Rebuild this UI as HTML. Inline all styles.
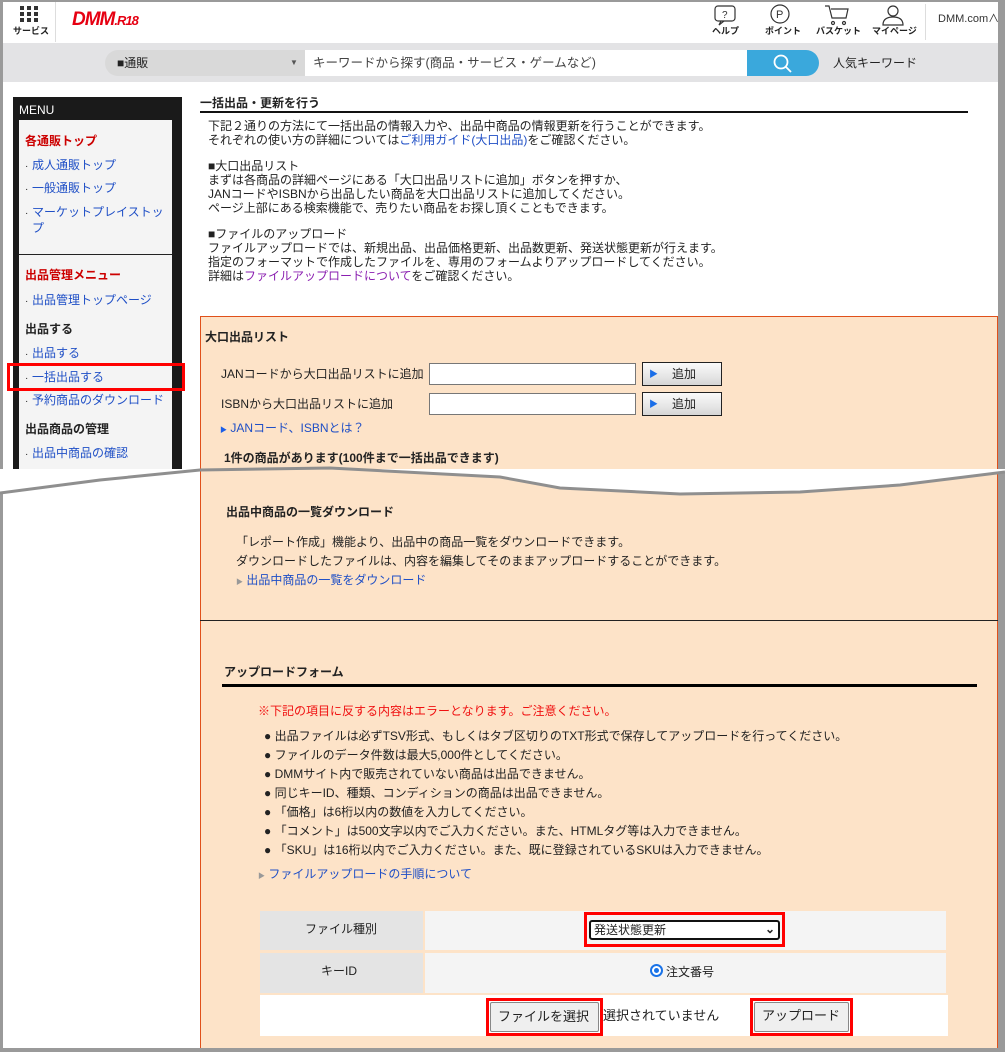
<!DOCTYPE html>
<html><head><meta charset="utf-8"><style>
*{margin:0;padding:0;box-sizing:border-box}
body{width:1005px;height:1052px;background:#9a9a9a;position:relative;overflow:hidden;font-family:"Liberation Sans","Noto Sans CJK JP",sans-serif;font-size:12px;color:#222}
.a{position:absolute;white-space:nowrap;line-height:14px}
.page{position:absolute;left:3px;top:2px;width:995px;height:1046px;background:#fff}
a,.lk{color:#1f4fc6;text-decoration:none}
b{font-weight:bold}
.red{color:#cc0000}
.sm{font-size:9px;line-height:10px}
.d{display:inline-block;width:7px;font-size:10px}
</style></head><body>
<div class="page"></div>
<!-- header -->
<div class="a" style="left:20px;top:6px;width:18px;height:16px">
<svg width="18" height="16"><g fill="#333"><rect x="0" y="0" width="4" height="4"/><rect x="7" y="0" width="4" height="4"/><rect x="14" y="0" width="4" height="4"/><rect x="0" y="6" width="4" height="4"/><rect x="7" y="6" width="4" height="4"/><rect x="14" y="6" width="4" height="4"/><rect x="0" y="12" width="4" height="4"/><rect x="7" y="12" width="4" height="4"/><rect x="14" y="12" width="4" height="4"/></g></svg></div>
<div class="a sm" style="left:13px;top:26px;font-weight:bold">サービス</div>
<div class="a" style="left:55px;top:2px;width:1px;height:40px;background:#ddd"></div>
<div class="a" style="left:72px;top:10px;color:#e60012;font-weight:900;font-size:19px;line-height:20px;font-style:italic;letter-spacing:-1px">DMM<span style="font-size:13px">.R18</span></div>
<svg class="a" style="left:712px;top:4px" width="200" height="22" fill="none" stroke="#333" stroke-width="1.2">
<rect x="3" y="2" width="20" height="15" rx="3"/><path d="M9 17 l-2 4 l5 -4"/>
<text x="10" y="14" font-size="10" fill="#333" stroke="none">?</text>
<circle cx="68" cy="10" r="9"/><text x="64" y="14" font-size="11" fill="#333" stroke="none">P</text>
<path d="M113 2 h4 l3 12 h14 l2 -9 h-17"/><circle cx="121" cy="19" r="1.5"/><circle cx="132" cy="19" r="1.5"/>
<circle cx="181" cy="7" r="5"/><path d="M171 21 c0 -6 4 -8 10 -8 c6 0 10 2 10 8 z"/>
</svg>
<div class="a sm" style="left:712px;top:26px;font-weight:bold">ヘルプ</div>
<div class="a sm" style="left:765px;top:26px;font-weight:bold">ポイント</div>
<div class="a sm" style="left:816px;top:26px;font-weight:bold">バスケット</div>
<div class="a sm" style="left:872px;top:26px;font-weight:bold">マイページ</div>
<div class="a" style="left:925px;top:4px;width:1px;height:36px;background:#ddd"></div>
<div class="a" style="left:938px;top:12px;font-size:11px;color:#333">DMM.com∧</div>
<div class="a" style="left:3px;top:43px;width:995px;height:39px;background:#e3e3e5"></div>
<div class="a" style="left:105px;top:50px;width:200px;height:26px;background:#d9d9d9;border-radius:13px 0 0 13px"></div>
<div class="a" style="left:305px;top:50px;width:442px;height:26px;background:#fff"></div>
<div class="a" style="left:747px;top:50px;width:72px;height:26px;background:#3aa8dc;border-radius:0 13px 13px 0"></div>
<svg class="a" style="left:772px;top:53px" width="22" height="22" fill="none" stroke="#fff" stroke-width="1.8"><circle cx="9" cy="9" r="6.5"/><path d="M14 14 l5 5"/></svg>
<div class="a" style="left:117px;top:56px">■通販</div>
<div class="a" style="left:290px;top:56px;font-size:8px;color:#555">▼</div>
<div class="a" style="left:313px;top:56px;color:#444;font-size:12.5px">キーワードから探す(商品・サービス・ゲームなど)</div>
<div class="a" style="left:833px;top:56px">人気キーワード</div>

<!-- sidebar -->
<div class="a" style="left:13px;top:97px;width:169px;height:372px;background:#1a1a1a"></div>
<div class="a" style="left:19px;top:103px;color:#fff;font-size:12px">MENU</div>
<div class="a" style="left:19px;top:120px;width:153px;height:349px;background:#f4f4f4"></div>
<div class="a" style="left:19px;top:254px;width:153px;height:1px;background:#222"></div>
<div class="a red" style="left:25px;top:134px;font-weight:bold">各通販トップ</div>
<div class="a" style="left:25px;top:158px"><span class="d">·</span><a>成人通販トップ</a></div>
<div class="a" style="left:25px;top:181px"><span class="d">·</span><a>一般通販トップ</a></div>
<div class="a" style="left:25px;top:205px"><span class="d">·</span><a>マーケットプレイストッ</a></div>
<div class="a" style="left:32px;top:221px"><a>プ</a></div>
<div class="a red" style="left:25px;top:268px;font-weight:bold">出品管理メニュー</div>
<div class="a" style="left:25px;top:293px"><span class="d">·</span><a>出品管理トップページ</a></div>
<div class="a" style="left:25px;top:322px;font-weight:bold">出品する</div>
<div class="a" style="left:25px;top:346px"><span class="d">·</span><a>出品する</a></div>
<div class="a" style="left:25px;top:370px"><span class="d">·</span><a>一括出品する</a></div>
<div class="a" style="left:7px;top:363px;width:178px;height:28px;border:3px solid #f00"></div>
<div class="a" style="left:25px;top:393px"><span class="d">·</span><a>予約商品のダウンロード</a></div>
<div class="a" style="left:25px;top:422px;font-weight:bold">出品商品の管理</div>
<div class="a" style="left:25px;top:446px"><span class="d">·</span><a>出品中商品の確認</a></div>

<!-- content top -->
<div class="a" style="left:200px;top:96px;font-weight:bold">一括出品・更新を行う</div>
<div class="a" style="left:200px;top:111px;width:768px;height:2px;background:#111"></div>
<div class="a" style="left:208px;top:119px">下記２通りの方法にて一括出品の情報入力や、出品中商品の情報更新を行うことができます。<br>それぞれの使い方の詳細については<a>ご利用ガイド(大口出品)</a>をご確認ください。</div>
<div class="a" style="left:208px;top:159px">■大口出品リスト<br>まずは各商品の詳細ページにある「大口出品リストに追加」ボタンを押すか、<br>JANコードやISBNから出品したい商品を大口出品リストに追加してください。<br>ページ上部にある検索機能で、売りたい商品をお探し頂くこともできます。</div>
<div class="a" style="left:208px;top:227px">■ファイルのアップロード<br>ファイルアップロードでは、新規出品、出品価格更新、出品数更新、発送状態更新が行えます。<br>指定のフォーマットで作成したファイルを、専用のフォームよりアップロードしてください。<br>詳細は<span style="color:#8a1fb0">ファイルアップロードについて</span>をご確認ください。</div>

<div class="a" style="left:200px;top:316px;width:798px;height:160px;background:#fde3c8;border:1px solid #e0501a;border-bottom:none"></div>
<div class="a" style="left:205px;top:330px;font-weight:bold">大口出品リスト</div>
<div class="a" style="left:221px;top:367px">JANコードから大口出品リストに追加</div>
<div class="a" style="left:221px;top:397px">ISBNから大口出品リストに追加</div>
<div class="a" style="left:429px;top:363px;width:207px;height:22px;background:#fff;border:1px solid #777"></div>
<div class="a" style="left:429px;top:393px;width:207px;height:22px;background:#fff;border:1px solid #777"></div>
<div class="a" style="left:642px;top:362px;width:80px;height:24px;border:1px solid #222;background:linear-gradient(#fafafa,#e6e6e6 60%,#d6d6d6)"><span style="position:absolute;left:6px;top:4px;color:#1a6ee8;font-size:9px">▶</span><span style="position:absolute;left:29px;top:4px">追加</span></div>
<div class="a" style="left:642px;top:392px;width:80px;height:24px;border:1px solid #222;background:linear-gradient(#fafafa,#e6e6e6 60%,#d6d6d6)"><span style="position:absolute;left:6px;top:4px;color:#1a6ee8;font-size:9px">▶</span><span style="position:absolute;left:29px;top:4px">追加</span></div>
<div class="a" style="left:220px;top:421px"><span style="color:#1a5ee8;font-size:7px">▶</span> <a>JANコード、ISBNとは？</a></div>
<div class="a" style="left:224px;top:451px;font-weight:bold">1件の商品があります(100件まで一括出品できます)</div>

<!-- bottom part -->
<div class="a" style="left:200px;top:476px;width:798px;height:572px;background:#fde3c8;border-left:1px solid #e0501a;border-right:1px solid #e0501a"></div>
<div class="a" style="left:200px;top:620px;width:798px;height:1px;background:#222"></div>
<svg class="a" style="left:0;top:462px" width="1005" height="45">
<path d="M0 7 H1005 V10 L900 22 L800 30 L680 33 L560 27 L500 16 L330 6 L200 8 L100 18 L0 31 Z" fill="#fff"/>
<path d="M0 31 L100 18 L200 8 L330 6 L500 15 L560 26 L680 32 L800 30 L900 23 L1005 10" fill="none" stroke="#8f8f8f" stroke-width="3"/>
</svg>
<div class="a" style="left:226px;top:505px;font-weight:bold">出品中商品の一覧ダウンロード</div>
<div class="a" style="left:236px;top:535px">「レポート作成」機能より、出品中の商品一覧をダウンロードできます。</div>
<div class="a" style="left:236px;top:554px">ダウンロードしたファイルは、内容を編集してそのままアップロードすることができます。</div>
<div class="a" style="left:236px;top:573px"><span style="color:#999;font-size:7px">▶</span> <a>出品中商品の一覧をダウンロード</a></div>

<div class="a" style="left:224px;top:665px;font-weight:bold">アップロードフォーム</div>
<div class="a" style="left:222px;top:684px;width:755px;height:3px;background:#000"></div>
<div class="a" style="left:258px;top:704px;color:#f01010">※下記の項目に反する内容はエラーとなります。ご注意ください。</div>
<div class="a" style="left:264px;top:727px;line-height:19px">●&nbsp;出品ファイルは必ずTSV形式、もしくはタブ区切りのTXT形式で保存してアップロードを行ってください。<br>●&nbsp;ファイルのデータ件数は最大5,000件としてください。<br>●&nbsp;DMMサイト内で販売されていない商品は出品できません。<br>●&nbsp;同じキーID、種類、コンディションの商品は出品できません。<br>●&nbsp;「価格」は6桁以内の数値を入力してください。<br>●&nbsp;「コメント」は500文字以内でご入力ください。また、HTMLタグ等は入力できません。<br>●&nbsp;「SKU」は16桁以内でご入力ください。また、既に登録されているSKUは入力できません。</div>
<div class="a" style="left:258px;top:867px"><span style="color:#999;font-size:7px">▶</span> <a>ファイルアップロードの手順について</a></div>

<div class="a" style="left:260px;top:911px;width:163px;height:39px;background:#e4e4e4"></div>
<div class="a" style="left:425px;top:911px;width:521px;height:39px;background:#f4f4f4"></div>
<div class="a" style="left:260px;top:953px;width:163px;height:40px;background:#e4e4e4"></div>
<div class="a" style="left:425px;top:953px;width:521px;height:40px;background:#f4f4f4"></div>
<div class="a" style="left:260px;top:995px;width:688px;height:41px;background:#fff"></div>
<div class="a" style="left:305px;top:922px">ファイル種別</div>
<div class="a" style="left:321px;top:964px">キーID</div>
<div class="a" style="left:584px;top:912px;width:201px;height:35px;border:3px solid #f00"></div>
<div class="a" style="left:589px;top:920px;width:191px;height:20px;border:2px solid #111;border-radius:3px;background:#fff"><span style="position:absolute;left:3px;top:1px">発送状態更新</span><span style="position:absolute;right:3px;top:0px;font-weight:bold">⌄</span></div>
<div class="a" style="left:650px;top:964px;width:13px;height:13px;border-radius:50%;border:2px solid #1a73e8;background:#fff"><div style="position:absolute;left:2px;top:2px;width:5px;height:5px;border-radius:50%;background:#1a73e8"></div></div>
<div class="a" style="left:666px;top:965px">注文番号</div>
<div class="a" style="left:486px;top:998px;width:117px;height:38px;border:3px solid #f00"></div>
<div class="a" style="left:490px;top:1002px;width:109px;height:30px;border:1px solid #888;background:#efefef;border-radius:2px"><span style="position:absolute;left:7px;top:7px;font-size:13px">ファイルを選択</span></div>
<div class="a" style="left:603px;top:1009px;font-size:13px">選択されていません</div>
<div class="a" style="left:750px;top:998px;width:103px;height:38px;border:3px solid #f00"></div>
<div class="a" style="left:754px;top:1002px;width:95px;height:30px;border:1px solid #888;background:#efefef;border-radius:2px"><span style="position:absolute;left:7px;top:6px;font-size:13px">アップロード</span></div>
</body></html>
